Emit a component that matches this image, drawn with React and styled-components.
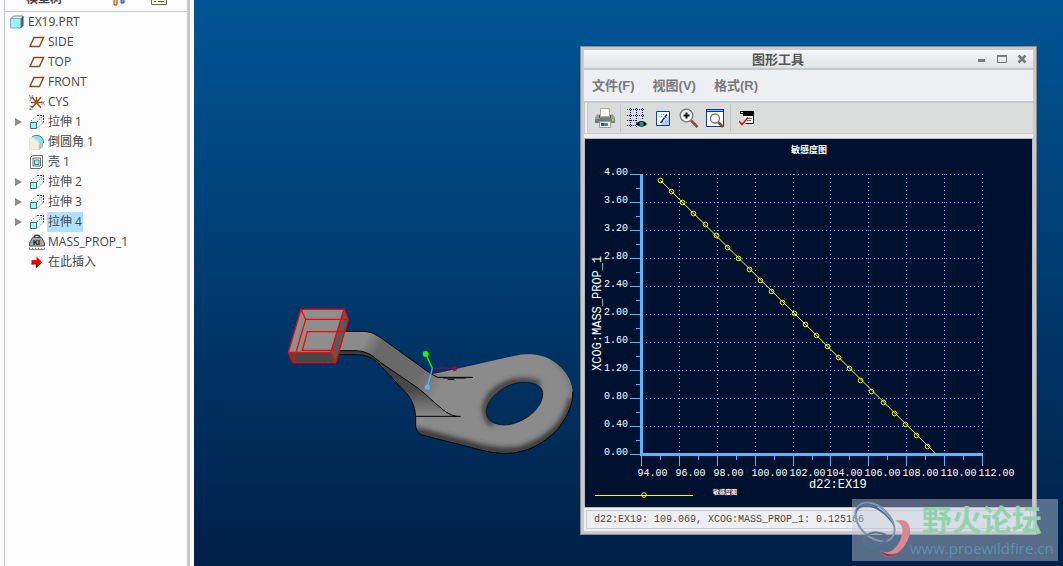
import React from "react"
import styled, { createGlobalStyle } from "styled-components"

const sans = `"Open Sans", "Noto Sans CJK SC", sans-serif`
const mono = `"Liberation Mono", "Noto Sans CJK SC", monospace`

const GlobalStyle = createGlobalStyle`
  * {
    box-sizing: border-box;
  }
  body {
    margin: 0;
    font-family: ${sans};
    font-size: 12px;
    color: #464646;
  }
  button {
    border: 0;
    padding: 0;
    background: none;
    font: inherit;
    color: inherit;
  }
  svg {
    display: block;
  }
`

const Page = styled.div`
  display: flex;
  height: 100vh;
  overflow: hidden;
`

/* ---------- model tree ---------- */

const Sidebar = styled.aside`
  flex: 0 0 194px;
  padding: 0 4px;
  background: #fbfbfb;
`

const TreePanel = styled.div`
  height: 100%;
  background: #fcfcfc;
  border-left: 1px solid #c3c6ca;
  border-right: 3px solid #c6c8cc;
`

const TreeHeader = styled.header`
  display: flex;
  align-items: flex-end;
  height: 12px;
  padding: 0 20px 5px 21px;
  overflow: hidden;
  border-bottom: 1px solid #c6c8cb;
`

const TreeTitle = styled.h2`
  flex: 1;
  margin: 0;
  font-size: 12px;
  line-height: 14px;
  font-weight: bold;
`

const HeaderButton = styled.button`
  width: 16px;
  margin-left: 24px;
`

const TreeList = styled.ul`
  margin: 0;
  padding: 0;
  list-style: none;
`

const TreeRow = styled.li`
  display: flex;
  align-items: center;
  height: 20px;
  padding-left: ${props => (props.$root ? 4 : 10)}px;
`

const Expander = styled.button`
  flex: 0 0 14px;
  height: 20px;
`

const Arrow = styled.span`
  display: block;
  width: 0;
  border: 4px solid transparent;
  border-left: 7px solid #8c8c8c;
  border-right: 0;
`

const RowLabel = styled.span`
  margin-left: 2px;
  padding: 0 1px;
  line-height: 20px;
  white-space: nowrap;
  background: ${props => (props.$selected ? "#b0e0ff" : "none")};
`

const Icon = ({ size = 16, children }) => (
  <svg width={size} height={size} viewBox={`0 0 ${size} ${size}`} fill="none">
    {children}
  </svg>
)

const PartIcon = () => (
  <Icon>
    <path d="M2 4.5 4.5 2H14v9.5L11.5 14V4.5z" fill="#4a7d80" />
    <path d="M2 4.5 4.5 2H14l-2.5 2.5z" fill="#fff" />
    <path d="M1.5 4.5h10v9.5h-10z" fill="#8ff" stroke="#9ab" />
    <path d="M2 4.5 4.5 2H14" stroke="#788" />
    <path d="M11.500 14 14 11.500V2" stroke="#344" />
  </Icon>
)

const PlaneIcon = () => (
  <Icon>
    <path d="M5 3.5h9.500L10.500 12.500H1z" stroke="#8f4a1c" strokeWidth="1.5" />
  </Icon>
)

const CsysIcon = () => (
  <Icon>
    <g stroke="#a04e18" strokeWidth="1.4">
      <path d="M2 8.500h11M3 3l9 11M12 3 3 14M7.500 3v6" />
    </g>
    <g fill="#666" fontSize="8" fontFamily="Liberation Sans">
      <text x="0" y="5">y</text>
      <text x="0" y="16">z</text>
      <text x="12" y="11">x</text>
    </g>
  </Icon>
)

const ExtrudeIcon = () => (
  <Icon>
    <path d="M8.500 3H13v5l-4 4V8H4z" fill="#e2f8f8" />
    <path d="M8 1.500h6.500v7" stroke="#333" strokeDasharray="2 1" />
    <path d="M10 3.500h3M12.500 3v4" stroke="#7ee8ee" />
    <path d="M2 7l5.500-5M8 8l5.500-5.500M9 13.500l5-5" stroke="#777" strokeDasharray="1.5 1.5" />
    <path d="M1.500 8.500h6v6h-6z" fill="#8ff" stroke="#55696b" />
  </Icon>
)

const RoundIcon = () => (
  <Icon>
    <path d="M0 5l4-2 6 6v7H0z" fill="#f1eee2" stroke="#d5d1c3" strokeWidth=".6" />
    <path d="M10 10l4-2v5l-4 3z" fill="#c3bfae" />
    <path d="M4 4c3-4 11-2 10.500 5L10.500 11C10 7 8 5 4 4z" fill="#7ee8ee" />
    <path d="M3 3c5-3.500 12-1 11.500 6" stroke="#3b8087" />
  </Icon>
)

const ShellIcon = () => (
  <Icon>
    <path d="M1.500 3.500 3.500 1.500h10v11l-2 2h-10z" fill="#fff" stroke="#6b6f70" />
    <path d="M4 4h7.500v8H4z" fill="#fff" stroke="#6b6f70" />
    <path d="M5.500 6h4.500v4.500H5.500z" fill="#8ff" stroke="#4b8285" />
  </Icon>
)

const MassIcon = () => (
  <Icon>
    <path d="M5 3.500c0-3 6-3 6 0" stroke="#333" strokeWidth="1.4" />
    <path d="M3.500 3.500h9l3 5.500v3H.5V9z" fill="#a3a3a3" stroke="#555" />
    <text x="4" y="11" fill="#111" fontSize="7" fontWeight="bold" fontFamily="Liberation Sans">KI</text>
    <path d="M.5 13.500v2h15v-2M3.500 14v1M6.500 14v1M9.500 14v1M12.500 14v1" stroke="#888" />
  </Icon>
)

const InsertIcon = () => (
  <Icon>
    <path d="M2.500 6h5V2.500L13 8l-5.500 5.500V10h-5z" fill="#f00" />
    <path d="M2.500 10h5v3.500L13 8" stroke="#600" />
  </Icon>
)

const tree = [
  { label: "SIDE", icon: PlaneIcon },
  { label: "TOP", icon: PlaneIcon },
  { label: "FRONT", icon: PlaneIcon },
  { label: "CYS", icon: CsysIcon },
  { label: "拉伸 1", icon: ExtrudeIcon, expandable: true },
  { label: "倒圆角 1", icon: RoundIcon },
  { label: "壳 1", icon: ShellIcon },
  { label: "拉伸 2", icon: ExtrudeIcon, expandable: true },
  { label: "拉伸 3", icon: ExtrudeIcon, expandable: true },
  { label: "拉伸 4", icon: ExtrudeIcon, expandable: true, selected: true },
  { label: "MASS_PROP_1", icon: MassIcon },
  { label: "在此插入", icon: InsertIcon },
]

const ModelTree = () => (
  <Sidebar>
    <TreePanel>
      <TreeHeader>
        <TreeTitle>模型树</TreeTitle>
        <HeaderButton aria-label="设置">
          <Icon>
            <path d="M3 2h3v13H3z" fill="#ffd27a" stroke="#a33a1a" />
            <path d="M10 2h3v11h-3z" fill="#6f9be0" stroke="#44546e" />
          </Icon>
        </HeaderButton>
        <HeaderButton aria-label="显示">
          <Icon>
            <path d="M.5.5h15v14H.5z" fill="#fffff0" stroke="#666" />
            <path d="M3 8.500h2M7 8.500h6M3 11.500h2M7 11.500h6" stroke="#555" />
          </Icon>
        </HeaderButton>
      </TreeHeader>
      <TreeList>
        <TreeRow $root>
          <PartIcon />
          <RowLabel>EX19.PRT</RowLabel>
        </TreeRow>
        {tree.map(item => (
          <TreeRow key={item.label}>
            <Expander as={item.expandable ? "button" : "span"} aria-label={item.expandable ? "展开" : undefined}>
              {item.expandable && <Arrow />}
            </Expander>
            <item.icon />
            <RowLabel $selected={item.selected}>{item.label}</RowLabel>
          </TreeRow>
        ))}
      </TreeList>
    </TreePanel>
  </Sidebar>
)

/* ---------- 3D view ---------- */

const Viewport = styled.main`
  position: relative;
  flex: 1;
  overflow: hidden;
  background: linear-gradient(#005596, #002048);
`

const ModelSvg = styled.svg`
  position: absolute;
  left: 81px;
  top: 295px;
  width: 310px;
  height: 170px;
`

const bodyPath =
  "M190 109H265C290 110 305 120 320 130L470 238 500 232 720 182C760 174 800 178 830 196C880 228 896 270 893 305C890 340 870 375 850 400C800 455 740 478 680 475C650 474 620 466 590 458L437 419C427 410 422 402 422 390V365C420 330 405 305 390 290L310 205C300 195 285 183 250 179H190Z"
const holePath =
  "M634 350C634 310 690 262 745 262C790 262 806 280 803 300C800 345 740 390 685 390C650 388 634 372 634 350Z"

const Model = () => (
  <ModelSvg viewBox="0 0 930 510" fill="none">
    <defs>
      <clipPath id="body">
        <path d={bodyPath + holePath} clipRule="evenodd" />
      </clipPath>
      <linearGradient id="arm" gradientUnits="userSpaceOnUse" x1="290" y1="110" x2="510" y2="260">
        <stop offset="0" stopColor="#8b8b8b" />
        <stop offset=".16" stopColor="#696969" />
        <stop offset=".72" stopColor="#6b6b6b" />
        <stop offset="1" stopColor="#8b8b8b" />
      </linearGradient>
      <linearGradient id="under" gradientUnits="userSpaceOnUse" x1="0" y1="170" x2="0" y2="364">
        <stop offset="0" stopColor="#3c3c3c" />
        <stop offset=".6" stopColor="#4a4a4a" />
        <stop offset="1" stopColor="#8b8b8b" />
      </linearGradient>
      <filter id="soft" x="-20%" y="-20%" width="140%" height="140%">
        <feGaussianBlur stdDeviation="8" />
      </filter>
    </defs>
    <g clipPath="url(#body)">
      <path d="M180 90H930V500H180z" fill="#8b8b8b" />
      <path
        d="M422 408L590 452C640 468 700 476 750 462C830 432 880 380 893 310"
        stroke="#383838"
        strokeWidth="24"
        filter="url(#soft)"
      />
      <path d="M830 190C880 228 900 270 893 330" stroke="#666" strokeWidth="8" filter="url(#soft)" />
      <path d="M655 388C620 365 625 315 665 285C700 258 750 250 795 268" stroke="#3a3a3a" strokeWidth="18" filter="url(#soft)" />
      <path d="M190 109H265C290 110 305 120 320 130L470 238 520 235V340L430 280 320 205C300 190 285 170 245 167H190Z" fill="url(#arm)" />
      <path d="M190 167H245C285 170 300 190 320 205L430 280C480 320 510 360 545 364H400L300 240 190 190Z" fill="url(#under)" />
    </g>
    <g stroke="#000" strokeWidth="3">
      <path d="M210 109H265C290 110 305 120 320 130L470 238 488 247H594" />
      <path d="M190 167H245C285 170 300 190 320 205L430 280C480 320 510 360 545 364" />
      <path d="M190 179H250C285 183 300 195 310 205L390 290C405 305 420 330 422 365V390C422 402 427 410 437 419L590 458C620 466 650 474 680 475C740 478 800 455 850 400C870 375 890 340 893 305V290" />
      <path d="M422 364H557M505 249H572M518 253H538" />
      <path d={holePath} strokeWidth="2" />
    </g>
    <path d="M78 43H207L167 172H40Z" fill="#8e8e8e" />
    <path d="M207 43L220 73 182 203 167 172Z" fill="#595959" />
    <path d="M40 172H167L182 203H54Z" fill="#474747" />
    <g stroke="#f00" strokeWidth="4">
      <path d="M78 43H207L220 73 182 203H54L40 172ZM40 172H167L207 43M167 172L182 203" />
      <path d="M78 43L92 73H220M92 73L54 203M210 110H97L82 166H180" />
    </g>
    <path d="M452 177L472 220" stroke="#0f0" strokeWidth="4" />
    <path d="M472 220H538" stroke="#a5003c" strokeWidth="3" />
    <path d="M472 220L457 277" stroke="#5ab4ff" strokeWidth="4" />
    <circle cx="452" cy="177" r="9" fill="#0f0" />
    <circle cx="539" cy="221" r="7" fill="#a5003c" />
    <circle cx="457" cy="277" r="8" fill="#5ab4ff" />
  </ModelSvg>
)

/* ---------- graph tool window ---------- */

const Window = styled.section`
  position: absolute;
  top: 46px;
  right: 26px;
  width: 457px;
  border: 1px solid #8b8b8b;
  background: #c8cacd;
  padding: 3px;
`

const TitleBar = styled.header`
  display: flex;
  align-items: center;
  height: 18px;
  padding-right: 1px;
  background: linear-gradient(#f7f7f8, #dfe1e4);
`

const WindowTitle = styled.h1`
  flex: 1;
  margin: 0;
  font-size: 13px;
  line-height: 18px;
  text-align: center;
  color: #555;
`

const CaptionButton = styled.button`
  display: grid;
  place-items: center;
  width: 20px;
  height: 18px;
`

const MenuBar = styled.nav`
  display: flex;
  align-items: center;
  gap: 18px;
  height: 35px;
  padding: 0 8px;
  background: #eeeff2;
  border: solid #c5c8cb;
  border-width: 2px 0;
`

const MenuButton = styled.button`
  font-family: "Liberation Sans", "Noto Sans CJK SC", sans-serif;
  font-size: 13px;
  font-weight: bold;
  line-height: 20px;
  color: #77797e;
`

const Toolbar = styled.div`
  display: flex;
  align-items: center;
  gap: 2px;
  height: 31px;
  background: #dadcdb;
  border-bottom: 1px solid #c5c8cb;
`

const Grip = styled.span`
  width: 4px;
  height: 100%;
  margin-right: 3px;
  background: #eeeff2;
  border-left: 1px solid #c5c8cb;
  border-right: 1px solid #c5c8cb;
`

const ToolSeparator = styled.span`
  width: 1px;
  height: 28px;
  margin: 0 2px 0 1px;
  background: #c3c6c8;
`

const ToolButton = styled.button`
  display: grid;
  place-items: center;
  width: 24px;
  height: 24px;
`

const ChartFrame = styled.div`
  border: 1px solid #b5b9bc;
  background: #001130;
`

const ChartGap = styled.div`
  height: 4px;
  background: #eeeff2;
`

const ChartSvg = styled.svg`
  width: 100%;
  height: auto;
  font-family: ${mono};
`

const StatusBar = styled.footer`
  padding: 2px;
  background: #eeeff2;
`

const StatusText = styled.output`
  display: block;
  padding: 0 7px;
  border: 1px solid #c9cacf;
  font-family: ${mono};
  font-size: 10px;
  line-height: 17px;
  white-space: nowrap;
`

const PrinterIcon = () => (
  <Icon size={20}>
    <path d="M5.500.5h9v8h-9z" fill="#fffdf2" stroke="#aaa" />
    <path d="M2 6.500h3v3h10v-3h3l2 3v5H0v-5z" fill="#9b9c9e" />
    <path d="M4.500 7v3h11V7" stroke="#555" />
    <path d="M0 11h20v4H0z" fill="#77797c" />
    <path d="M17 11h2v2h-2z" fill="#6f4" />
    <path d="M4.500 13.500h11v6h-11z" fill="#fff" stroke="#999" />
    <path d="M6 15h4v3H6z" fill="#1d50c8" />
    <path d="M9 15h4v3H9z" fill="#16a0a0" />
  </Icon>
)

const GridIcon = () => (
  <Icon size={20}>
    <path
      d="M0 1.500h18M0 7.500h18M0 12.500h10M0 17.500h9M3.500 0v19M9.500 0v19M15.500 0v12"
      stroke="#0a0a80"
      strokeDasharray="1 1"
    />
    <path d="M9 16c3-4 8-4 11 0-3 3.500-8 3.500-11 0z" fill="#111" />
    <circle cx="14.500" cy="16" r="2.200" fill="#1a9494" />
  </Icon>
)

const RepaintIcon = () => (
  <Icon>
    <path d="M1.500 1.500h13v14h-13z" fill="#eef6ff" stroke="#0c3c96" />
    <path d="M6 15l8-9v9z" fill="#a9cdf2" />
    <path d="M12 4.500 7 11" stroke="#224" strokeWidth="1.4" />
    <path d="M4 6.500h3M6 4.500h4M9 7.500h4M10 11.500h3" stroke="#7a9cc0" strokeDasharray="1 1" />
    <path d="M5 13c1-3 3-3 3-1.500s-1 1.500-3 1.500z" fill="#335" />
  </Icon>
)

const ZoomInIcon = () => (
  <Icon size={20}>
    <path d="M12 12.500l6.500 6.500" stroke="#8a4a30" strokeWidth="2.500" />
    <circle cx="7.500" cy="7.500" r="6.300" fill="#f3f6f5" stroke="#777" strokeWidth="1.300" />
    <path d="M4.500 7.500h6M7.500 4.500v6" stroke="#000" strokeWidth="2" />
  </Icon>
)

const RefitIcon = () => (
  <Icon size={20}>
    <path d="M1.500 1.500h17v17h-17z" fill="#fff" stroke="#063a9c" />
    <path d="M1 1h18v3H1z" fill="#063a9c" />
    <path d="M2 2.500h16" stroke="#8fb5ee" />
    <path d="M13 14l5 5" stroke="#8a4a30" strokeWidth="2.500" />
    <circle cx="10" cy="10.500" r="4.500" fill="#f3f6f5" stroke="#777" strokeWidth="1.300" />
  </Icon>
)

const FormatIcon = () => (
  <Icon>
    <path d="M1 1h14v3H1z" fill="#000" />
    <path d="M2 2.500h2" stroke="#fff" />
    <path d="M4.500 4h10v9.500h-8" fill="#fff" stroke="#000" />
    <path d="M4 4h11v2H4z" fill="#000" />
    <path d="M9 8.500h4M8 10.500h4" stroke="#666" />
    <path d="M0 11l3 3.500 6-7" stroke="#f00" strokeWidth="1.500" />
  </Icon>
)

// plot area inside the 447x368 chart drawing
const left = 56.5
const right = 397.5
const bottom = 315.5

const xTicks = Array.from({ length: 19 }, (_, i) => ({
  x: Math.floor(left + (i * (right - left)) / 18) + 0.5,
  label: i % 2 === 0 ? (94 + i).toFixed(2) : null,
}))

const yTicks = Array.from({ length: 21 }, (_, i) => ({
  y: bottom - i * 14,
  label: i % 2 === 0 ? (i * 0.2).toFixed(2) : null,
}))

const points = Array.from({ length: 25 }, (_, i) => ({
  x: Math.round(75 + (i * 267) / 24) + 0.5,
  y: Math.round(41 + (i * 266) / 24) + 0.5,
}))

const SensitivityChart = () => (
  <ChartSvg viewBox="0 0 447 368" fill="none" role="img" aria-label="敏感度图">
    <g stroke="#5ab4ff" strokeDasharray="1 3">
      {xTicks
        .filter(t => t.label && t.x > left)
        .map(t => (
          <path key={t.x} d={`M${t.x} 35V314`} />
        ))}
      {yTicks
        .filter(t => t.label && t.y < bottom)
        .map(t => (
          <path key={t.y} d={`M61 ${t.y}H398`} />
        ))}
    </g>
    <g stroke="#5ab4ff">
      {xTicks.map(t => (
        <path key={t.x} d={`M${t.x} 316v${t.label ? 11 : 5}`} />
      ))}
      {yTicks.map(t => (
        <path key={t.y} d={`M56 ${t.y}h${t.label ? -11 : -5}`} />
      ))}
      <path d="M56.500 35V315.500H398" strokeWidth="3" />
    </g>
    <g fill="#fff" fontSize="10">
      {xTicks
        .filter(t => t.label)
        .map(t => (
          <text key={t.x} x={t.x - 4} y="337">{t.label}</text>
        ))}
      {yTicks
        .filter(t => t.label)
        .map(t => (
          <text key={t.y} x="43" y={t.y} textAnchor="end">{t.label}</text>
        ))}
    </g>
    <g fill="#fff" fontSize="12">
      <text x="224" y="349">d22:EX19</text>
      <text transform="translate(16 232) rotate(-90)">XCOG:MASS_PROP_1</text>
    </g>
    <text x="206" y="14" fill="#fff" fontSize="9" fontWeight="bold">敏感度图</text>
    <text x="128" y="355" fill="#fff" fontSize="6" fontWeight="bold">敏感度图</text>
    <g stroke="#ff0">
      <path d={`M${points[0].x} ${points[0].y}L350.500 314.500`} />
      {points.map(p => (
        <circle key={p.x} cx={p.x} cy={p.y} r="2.300" />
      ))}
      <path d="M10 356.500h98" />
      <circle cx="59" cy="356" r="2.300" />
    </g>
  </ChartSvg>
)

const GraphTool = () => (
  <Window>
    <TitleBar>
      <WindowTitle>图形工具</WindowTitle>
      <CaptionButton aria-label="最小化">
        <Icon size={12}>
          <path d="M2 7.500h7" stroke="#77797d" strokeWidth="3" />
        </Icon>
      </CaptionButton>
      <CaptionButton aria-label="最大化">
        <Icon size={12}>
          <path d="M1.500 2.500h9v7h-9z" stroke="#77797d" />
          <path d="M1 3h10" stroke="#77797d" strokeWidth="2" />
        </Icon>
      </CaptionButton>
      <CaptionButton aria-label="关闭">
        <Icon size={12}>
          <path d="M2.500 2.500l7 7M9.500 2.500l-7 7" stroke="#77797d" strokeWidth="2.500" />
        </Icon>
      </CaptionButton>
    </TitleBar>
    <MenuBar>
      <MenuButton>文件(F)</MenuButton>
      <MenuButton>视图(V)</MenuButton>
      <MenuButton>格式(R)</MenuButton>
    </MenuBar>
    <Toolbar>
      <Grip />
      <ToolButton aria-label="打印"><PrinterIcon /></ToolButton>
      <ToolSeparator />
      <ToolButton aria-label="栅格"><GridIcon /></ToolButton>
      <ToolButton aria-label="重画"><RepaintIcon /></ToolButton>
      <ToolButton aria-label="放大"><ZoomInIcon /></ToolButton>
      <ToolButton aria-label="重新调整"><RefitIcon /></ToolButton>
      <ToolSeparator />
      <ToolButton aria-label="格式"><FormatIcon /></ToolButton>
    </Toolbar>
    <ChartGap />
    <ChartFrame>
      <SensitivityChart />
    </ChartFrame>
    <StatusBar>
      <StatusText>d22:EX19: 109.069, XCOG:MASS_PROP_1: 0.125166</StatusText>
    </StatusBar>
  </Window>
)

/* ---------- forum watermark ---------- */

const Watermark = styled.div`
  position: absolute;
  right: 5px;
  bottom: 5px;
  display: flex;
  width: 206px;
  height: 62px;
  background: rgba(190, 200, 215, 0.45);
`

const WatermarkText = styled.div`
  display: flex;
  flex-direction: column;
  align-items: center;
`

const ForumName = styled.strong`
  font-family: "Noto Sans CJK SC", sans-serif;
  font-size: 30px;
  line-height: 38px;
  color: #92d3ae;
`

const ForumLink = styled.a`
  font-size: 15px;
  line-height: 22px;
  text-decoration: none;
  color: #5f90ad;
`

const ForumMark = () => (
  <Watermark>
    <svg width="58" height="62" viewBox="0 0 58 62" fill="none">
      <path
        d="M43 22C54 18 61 26 57 38C53 50 41 61 33 57C31 56 29 54 28 51C36 57 45 50 49 39C52 29 50 24 43 22Z"
        fill="#d98791"
      />
      <path d="M28 51C31 58 39 60 46 54C40 56 34 56 28 51Z" fill="#8c3a60" />
      <ellipse cx="23" cy="23" rx="23" ry="15" transform="rotate(44 23 23)" stroke="#8396ad" strokeWidth="2" />
      <path d="M4 16C3 7 11 2 21 6C30 10 39 18 42 27C35 17 27 10 18 8C10 6 6 9 4 16Z" fill="#54708f" />
      <path d="M34 36C22 30 10 36 12 43C14 51 26 49 35 40" stroke="#60738f" strokeWidth="2" />
      <path d="M12 43C13 51 24 51 33 43C25 47 17 47 12 43Z" fill="#54708f" />
    </svg>
    <WatermarkText>
      <ForumName>野火论坛</ForumName>
      <ForumLink href="#forum">www.proewildfire.cn</ForumLink>
    </WatermarkText>
  </Watermark>
)

const App = () => (
  <Page>
    <GlobalStyle />
    <ModelTree />
    <Viewport>
      <Model />
      <GraphTool />
      <ForumMark />
    </Viewport>
  </Page>
)

export default App
